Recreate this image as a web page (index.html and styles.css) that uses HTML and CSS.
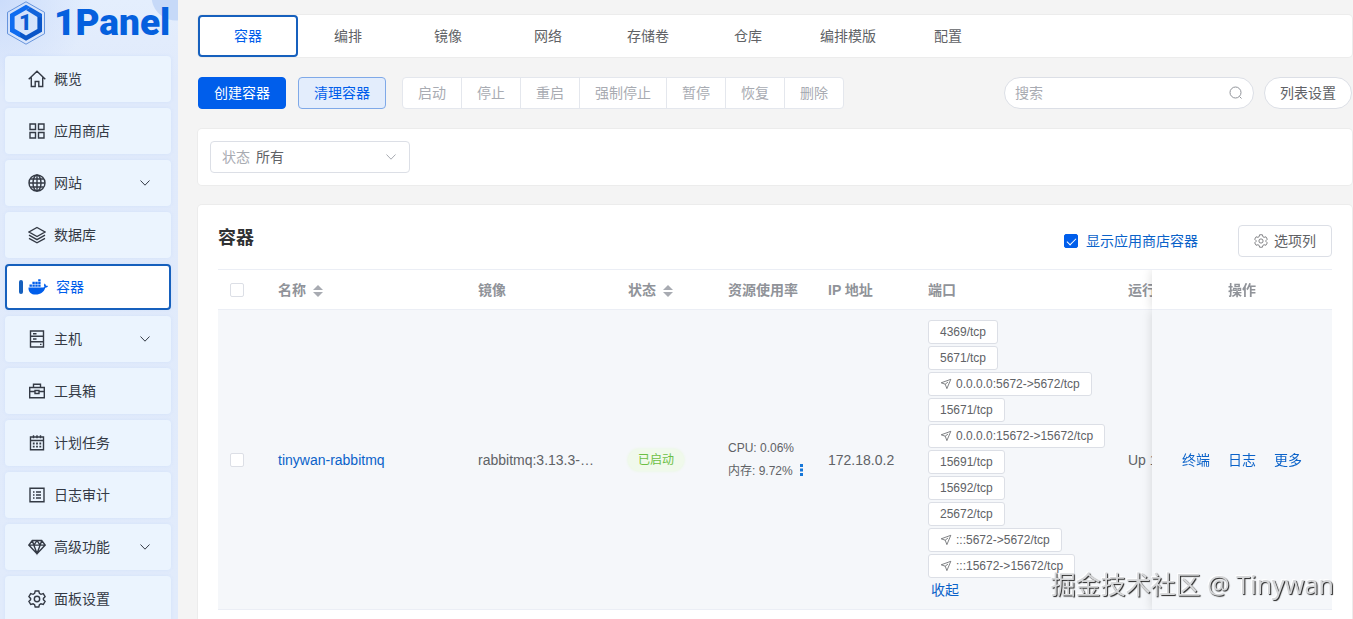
FILE: index.html
```html
<!DOCTYPE html>
<html lang="zh-CN">
<head>
  <meta charset="UTF-8" />
  <meta name="viewport" content="width=device-width, initial-scale=1.0" />
  <title>容器 - 1Panel</title>
  <link rel="stylesheet" href="styles.css">
</head>
<body>
  <svg class="sprite" aria-hidden="true">
    <symbol id="i-down" viewBox="0 0 12 12"><path d="M1.5 3.5 6 8.2l4.5-4.7" /></symbol>
    <symbol id="i-plane" viewBox="0 0 12 12"><path d="M10.800 1.300 1.200 4.800l4 1.400 1.700 4.400z M5.200 6.200 8 4" /></symbol>
    <symbol id="i-gear" viewBox="0 0 18 18">
      <path d="M7.2 1h3.6l.6 2.4 1.5.9 2.4-.7 1.8 3.1L15.400 8.400v1.300l1.700 1.700-1.800 3.100-2.400-.7-1.500.9-.6 2.300H7.200l-.6-2.300-1.500-.9-2.400.7L.9 11.400l1.700-1.700V8.400L.9 6.700l1.800-3.100 2.400.7 1.500-.9z" />
      <circle cx="9" cy="9" r="2.700" />
    </symbol>
  </svg>

  <aside class="sidebar">
    <div class="logo">
      <svg class="logo-mark" viewBox="0 0 40 44">
        <path d="M20 .8 38.500 11.300v21.400L20 43.200 1.500 32.700V11.300z" fill="none" stroke="#4a80d4" stroke-width=".8" />
        <path d="M24.500 6.300 20 3.800 4 12.900v17.300l4.600 2.600V15.600L20 9z" fill="#0f6cf0" />
        <path d="M9.500 33.600 20 39.800l16-9.100V13.500l-4.600-2.600v17.200L20 34.600l-5.800-3.500z" fill="#0a55c8" />
        <path d="M24.500 6.300 36 12.900v3.500l-4.600-.4L20 9z" fill="#1263db" />
        <path d="M4 27v3.700l10.200 5.700V31l-5.600-3.200z" fill="#0f6cf0" />
        <text x="19.500" y="29" text-anchor="middle">1</text>
      </svg>
      <span class="logo-text">1Panel</span>
    </div>
    <nav class="menu">
      <a class="menu-item" href="#">
        <svg class="icon" viewBox="0 0 18 18"><path d="M.7 9.200 9 1.300l8.300 7.900M3.300 7.500v9h3.900v-5h3.600v5h3.900v-9" /></svg>
        <span>概览</span>
      </a>
      <a class="menu-item" href="#">
        <svg class="icon" viewBox="0 0 18 18"><path d="M2 2h5.500v5.500H2zM10.500 2H16v5.500h-5.500zM2 10.500h5.500V16H2zM10.500 10.500H16V16h-5.500z" /></svg>
        <span>应用商店</span>
      </a>
      <a class="menu-item" href="#">
        <svg class="icon" viewBox="0 0 18 18"><circle cx="9" cy="9" r="8" /><ellipse cx="9" cy="9" rx="4" ry="8" /><path d="M9 1v16M1 9h16M2.300 5h13.400M2.300 13h13.400" /></svg>
        <span>网站</span>
        <svg class="arrow"><use href="#i-down" /></svg>
      </a>
      <a class="menu-item" href="#">
        <svg class="icon" viewBox="0 0 18 18"><path d="M9 1.500 17 6l-8 4.500L1 6zM1 9.200l8 4.400 8-4.400M1 12.400l8 4.400 8-4.400" /></svg>
        <span>数据库</span>
      </a>
      <a class="menu-item active" href="#">
        <svg class="icon docker" viewBox="0 0 20 18">
          <path d="M.5 9.400h14.700c.5-.1 1-.3 1.300-.6-.7-1-.6-2.200.1-3.300.8.500 1.300 1.200 1.400 2.200.8-.1 1.500 0 2 .4-.4 1-1.300 1.600-2.700 1.600C15.900 14 12.600 16.500 7.700 16.500 3 16.500.3 14 .5 9.400z" />
          <path d="M1.500 6.500h2.400v2.300H1.500zM4.400 6.500h2.400v2.300H4.400zM7.300 6.500h2.400v2.300H7.300zM10.200 6.500h2.400v2.300h-2.400zM4.400 3.800h2.400v2.200H4.400zM7.300 3.800h2.400v2.200H7.300zM10.200 3.800h2.400v2.200h-2.400zM10.200 1.300h2.400v2h-2.400z" />
        </svg>
        <span>容器</span>
      </a>
      <a class="menu-item" href="#">
        <svg class="icon" viewBox="0 0 18 18"><path d="M2.500 1h13v16h-13zM2.500 6.300h13M2.500 11.700h13M5 3.700h3.500M5 9h3.500M12 14.400h1.500" /></svg>
        <span>主机</span>
        <svg class="arrow"><use href="#i-down" /></svg>
      </a>
      <a class="menu-item" href="#">
        <svg class="icon" viewBox="0 0 18 18"><path d="M1.700 5.500h14.600v10.300H1.700zM5.500 5.300V2.200h7v3.100M1.700 9.500h5M11.300 9.500h5M7 8.500h4v3H7z" /></svg>
        <span>工具箱</span>
      </a>
      <a class="menu-item" href="#">
        <svg class="icon" viewBox="0 0 18 18"><path d="M2.500 3h13v12.800h-13zM2.500 6.500h13M5.500 1.300v3M9 1.300v3M12.500 1.300v3" /><path d="M4.800 9.500h8.400M4.800 12.700h8.400" stroke-dasharray="1.800 1.500" stroke-width="1.800" /></svg>
        <span>计划任务</span>
      </a>
      <a class="menu-item" href="#">
        <svg class="icon" viewBox="0 0 18 18"><path d="M2 2.200h14v13.600H2zM5 6h1.500M8 6h5M5 9h1.500M8 9h5M5 12h1.500M8 12h5" /></svg>
        <span>日志审计</span>
      </a>
      <a class="menu-item" href="#">
        <svg class="icon" viewBox="0 0 18 18"><path d="M4.300 2.500h9.400l3.500 4.600L9 15.800.8 7.100zM.8 7.100h16.400M4.300 2.500l1.500 4.600L9 15.500l3.200-8.400 1.500-4.600M5.800 7.100 9 2.700l3.200 4.400" /></svg>
        <span>高级功能</span>
        <svg class="arrow"><use href="#i-down" /></svg>
      </a>
      <a class="menu-item" href="#">
        <svg class="icon"><use href="#i-gear" /></svg>
        <span>面板设置</span>
      </a>
    </nav>
  </aside>

  <main class="content">
    <nav class="card tabs">
      <a class="tab active" href="#">容器</a>
      <a class="tab" href="#">编排</a>
      <a class="tab" href="#">镜像</a>
      <a class="tab" href="#">网络</a>
      <a class="tab" href="#">存储卷</a>
      <a class="tab" href="#">仓库</a>
      <a class="tab" href="#">编排模版</a>
      <a class="tab" href="#">配置</a>
    </nav>

    <div class="toolbar">
      <button class="btn primary">创建容器</button>
      <button class="btn plain">清理容器</button>
      <div class="btn-group">
        <button class="btn" disabled>启动</button>
        <button class="btn" disabled>停止</button>
        <button class="btn" disabled>重启</button>
        <button class="btn" disabled>强制停止</button>
        <button class="btn" disabled>暂停</button>
        <button class="btn" disabled>恢复</button>
        <button class="btn" disabled>删除</button>
      </div>
      <div class="search">
        <input type="text" placeholder="搜索" aria-label="搜索">
        <svg viewBox="0 0 14 14"><circle cx="6.500" cy="6.500" r="5.500" /><path d="m10.500 10.500 2 2" /></svg>
      </div>
      <button class="btn round">列表设置</button>
    </div>

    <section class="card filter">
      <div class="select">
        <label for="state">状态</label>
        <select id="state">
          <option>所有</option>
          <option>已启动</option>
          <option>已停止</option>
        </select>
        <svg class="arrow"><use href="#i-down" /></svg>
      </div>
    </section>

    <section class="card panel">
      <header class="panel-head">
        <h2>容器</h2>
        <label class="show-app"><input type="checkbox" checked> 显示应用商店容器</label>
        <button class="btn columns"><svg><use href="#i-gear" /></svg>选项列</button>
      </header>
      <div class="table-wrap">
        <table>
          <colgroup>
            <col class="w-check"><col class="w-200"><col class="w-150"><col class="w-100"><col class="w-100"><col class="w-100"><col class="w-200"><col class="w-150"><col class="w-ops">
          </colgroup>
          <thead>
            <tr>
              <th><input type="checkbox" aria-label="全选"></th>
              <th>名称 <span class="sort"></span></th>
              <th>镜像</th>
              <th>状态 <span class="sort"></span></th>
              <th>资源使用率</th>
              <th>IP 地址</th>
              <th>端口</th>
              <th>运行时长</th>
              <th class="fixed">操作</th>
            </tr>
          </thead>
          <tbody>
            <tr>
              <td><input type="checkbox" aria-label="tinywan-rabbitmq"></td>
              <td><a href="#">tinywan-rabbitmq</a></td>
              <td>rabbitmq:3.13.3-…</td>
              <td><span class="status">已启动</span></td>
              <td class="usage">
                <div>CPU: 0.06%</div>
                <div>内存: 9.72% <svg viewBox="0 0 3 12"><path d="M0 0h3v3H0zM0 4.500h3v3H0zM0 9h3v3H0z" /></svg></div>
              </td>
              <td>172.18.0.2</td>
              <td>
                <div class="ports">
                  <button class="port">4369/tcp</button>
                  <button class="port">5671/tcp</button>
                  <button class="port"><svg><use href="#i-plane" /></svg>0.0.0.0:5672-&gt;5672/tcp</button>
                  <button class="port">15671/tcp</button>
                  <button class="port"><svg><use href="#i-plane" /></svg>0.0.0.0:15672-&gt;15672/tcp</button>
                  <button class="port">15691/tcp</button>
                  <button class="port">15692/tcp</button>
                  <button class="port">25672/tcp</button>
                  <button class="port"><svg><use href="#i-plane" /></svg>:::5672-&gt;5672/tcp</button>
                  <button class="port"><svg><use href="#i-plane" /></svg>:::15672-&gt;15672/tcp</button>
                  <a class="fold" href="#">收起</a>
                </div>
              </td>
              <td>Up 1</td>
              <td class="fixed">
                <div class="ops"><a href="#">终端</a><a href="#">日志</a><a href="#">更多</a></div>
              </td>
            </tr>
          </tbody>
        </table>
      </div>
    </section>
  </main>

  <div class="watermark">掘金技术社区 @ Tinywan</div>
</body>
</html>
```
FILE: styles.css
```css
:root {
  --primary: #005eeb;
  --link: #0a62c9;
  --text: #606266;
  --muted: #909399;
  --disabled: #a8abb2;
  --border: #dcdfe6;
  --line: #ebeef5;
}

* {
  box-sizing: border-box;
}

body {
  margin: 0;
  height: 100vh;
  display: flex;
  overflow: hidden;
  position: relative;
  background: #f4f4f4;
  color: var(--text);
  font-family: "Liberation Sans", "Noto Sans CJK SC", sans-serif;
  font-size: 14px;
  line-height: 18px;
}

a {
  color: var(--link);
  text-decoration: none;
}

button,
input,
select {
  font: inherit;
}

svg {
  flex: none;
  fill: none;
  stroke: currentColor;
}

.sprite {
  position: absolute;
  width: 0;
  height: 0;
}

/* sidebar */
.sidebar {
  flex: none;
  width: 178px;
  overflow: hidden;
  background:
    radial-gradient(circle at 176px -4px, #c6d9f8 24px, transparent 25px),
    radial-gradient(circle at 0 0, #cbdcfb 0, transparent 90px),
    linear-gradient(#e4eefd, #e0eafb 80px, #e1ebfb);
}

.logo {
  display: flex;
  align-items: center;
  gap: 8px;
  height: 46px;
  padding-left: 6px;
  margin-bottom: 10px;
}

.logo-mark {
  width: 40px;
  height: 44px;
  stroke: none;
}

.logo-mark text {
  font: 900 22px Roboto, sans-serif;
  fill: #0b5bd3;
}

.logo-text {
  font: 900 37px/46px Roboto, sans-serif;
  color: #0560de;
}

.menu {
  display: flex;
  flex-direction: column;
  gap: 6px;
  padding: 0 7px 0 5px;
}

.menu-item {
  flex: none;
  display: flex;
  align-items: center;
  gap: 8px;
  height: 46px;
  padding: 0 20px 0 23px;
  border-radius: 4px;
  background: #ebf4fe;
  box-shadow: 0 0 4px rgba(0, 94, 235, 0.06);
  color: #343a45;
}

.icon {
  width: 18px;
  height: 18px;
  stroke-width: 1.4;
}

.arrow {
  width: 12px;
  height: 12px;
  margin-left: auto;
}

.menu-item.active {
  padding-left: 12px;
  border: 2px solid #1660bd;
  background: #fff;
  color: var(--primary);
}

.menu-item.active::before {
  content: "";
  width: 4px;
  height: 14px;
  margin-right: -3px;
  border-radius: 2px;
  background: #1660bd;
}

.docker {
  width: 20px;
  fill: currentColor;
  stroke: none;
}

/* main area */
.content {
  flex: 1;
  min-width: 0;
  display: flex;
  flex-direction: column;
  gap: 20px;
  padding: 15px 1px 0 20px;
}

.card {
  flex: none;
  border-radius: 4px;
  background: #fff;
  box-shadow: 0 0 0 1px #ececec;
}

.tabs {
  display: flex;
}

.tab {
  width: 100px;
  line-height: 42px;
  text-align: center;
  color: var(--text);
}

.tab.active {
  line-height: 38px;
  border: 2px solid #1660bd;
  border-radius: 4px;
  color: var(--primary);
}

.toolbar {
  display: flex;
}

.btn {
  height: 32px;
  padding: 0 15px;
  border: 1px solid var(--border);
  border-radius: 4px;
  background: #fff;
  color: var(--text);
  white-space: nowrap;
}

.btn.primary {
  margin-right: 12px;
  border-color: var(--primary);
  background: var(--primary);
  color: #fff;
}

.btn.plain {
  margin-right: 16px;
  border-color: #7fa9e8;
  background: #e3edfc;
  color: var(--primary);
}

.btn-group {
  display: flex;
}

.btn-group .btn {
  border-color: #e4e7ed;
  border-radius: 0;
  color: var(--disabled);
}

.btn-group .btn + .btn {
  margin-left: -1px;
}

.btn-group .btn:first-child {
  border-radius: 4px 0 0 4px;
}

.btn-group .btn:last-child {
  border-radius: 0 4px 4px 0;
}

.search {
  display: flex;
  align-items: center;
  width: 250px;
  margin-left: auto;
  margin-right: 10px;
  padding: 0 10px;
  border: 1px solid var(--border);
  border-radius: 16px;
  background: #fff;
  color: var(--muted);
}

.search input {
  flex: 1;
  min-width: 0;
  padding: 0;
  border: 0;
  outline: 0;
  background: none;
}

.search input::placeholder {
  color: var(--disabled);
}

.search svg {
  width: 14px;
  height: 14px;
}

.btn.round {
  border-radius: 16px;
}

.filter {
  padding: 12px;
}

.select {
  display: flex;
  align-items: center;
  gap: 6px;
  width: 200px;
  height: 32px;
  padding: 0 12px 0 11px;
  border: 1px solid var(--border);
  border-radius: 4px;
  color: var(--disabled);
}

.select select {
  flex: 1;
  appearance: none;
  padding: 0;
  border: 0;
  background: none;
  color: var(--text);
}

.panel {
  padding: 20px;
}

.panel-head {
  display: flex;
  align-items: center;
  margin-bottom: 12px;
}

.panel-head h2 {
  margin: 0 auto 6px 0;
  font-size: 18px;
  line-height: 26px;
  color: #303133;
}

.show-app {
  display: flex;
  align-items: center;
  gap: 8px;
  margin-right: 40px;
  color: var(--link);
}

.columns {
  display: flex;
  align-items: center;
  gap: 6px;
}

.columns svg {
  width: 14px;
  height: 14px;
}

input[type="checkbox"] {
  appearance: none;
  display: grid;
  place-content: center;
  width: 14px;
  height: 14px;
  margin: 0;
  border: 1px solid var(--border);
  border-radius: 2px;
  background: #fff;
}

input[type="checkbox"]:checked {
  border-color: var(--primary);
  background: var(--primary);
}

input[type="checkbox"]:checked::after {
  content: "";
  width: 8px;
  height: 4px;
  margin-bottom: 2px;
  border: solid #fff;
  border-width: 0 0 1px 1px;
  transform: rotate(-45deg);
}

/* table */
.table-wrap {
  overflow: hidden;
  border-top: 1px solid var(--line);
}

table {
  width: 100%;
  min-width: 1228px;
  table-layout: fixed;
  border-collapse: separate;
  border-spacing: 0;
}

.w-check { width: 48px; }
.w-100 { width: 100px; }
.w-150 { width: 150px; }
.w-200 { width: 200px; }
.w-ops { width: 180px; }

th,
td {
  padding: 0 12px;
  border-bottom: 1px solid var(--line);
  text-align: left;
  white-space: nowrap;
}

th {
  height: 40px;
  background: #fff;
  color: var(--muted);
}

td {
  background: #f5f7fa;
}

/* keeps the shadow on the left side only */
.fixed {
  position: sticky;
  right: 0;
  text-align: center;
  box-shadow: 0 0 10px rgba(0, 0, 0, 0.14);
  clip-path: inset(0 0 0 -12px);
}

.sort {
  display: inline-flex;
  flex-direction: column;
  gap: 2px;
  margin-left: 3px;
  vertical-align: middle;
}

.sort::before,
.sort::after {
  content: "";
  border: 5px solid transparent;
}

.sort::before {
  border-top: 0;
  border-bottom-color: var(--disabled);
}

.sort::after {
  border-bottom: 0;
  border-top-color: var(--disabled);
}

.status {
  display: inline-block;
  padding: 0 10px;
  border-radius: 12px;
  background: #f0f9eb;
  box-shadow: 0 0 3px #e6f8d8;
  color: #6cbf45;
  font-size: 12px;
  line-height: 22px;
}

.usage {
  font-size: 12px;
  line-height: 23px;
}

.usage svg {
  width: 3px;
  height: 12px;
  margin-left: 4px;
  vertical-align: -1px;
  fill: #1677d8;
  stroke: none;
}

.ports {
  display: flex;
  flex-direction: column;
  align-items: flex-start;
  gap: 2px;
  padding: 10px 0 9px;
}

.port {
  display: flex;
  align-items: center;
  gap: 4px;
  height: 24px;
  padding: 0 11px;
  border: 1px solid var(--border);
  border-radius: 3px;
  background: #fff;
  color: var(--text);
  font-size: 12px;
}

.port svg {
  width: 12px;
  height: 12px;
  stroke-width: 0.8;
}

.fold {
  padding-left: 3px;
  line-height: 20px;
}

.ops {
  display: flex;
  justify-content: center;
  gap: 18px;
}

.watermark {
  position: absolute;
  right: 19px;
  bottom: 16px;
  font: 25px/38px "Noto Sans", "Noto Sans CJK SC", sans-serif;
  color: #d5d6d8;
  text-shadow: 1px 1px 1px #222, -1px -1px 1px #fff;
}
```
